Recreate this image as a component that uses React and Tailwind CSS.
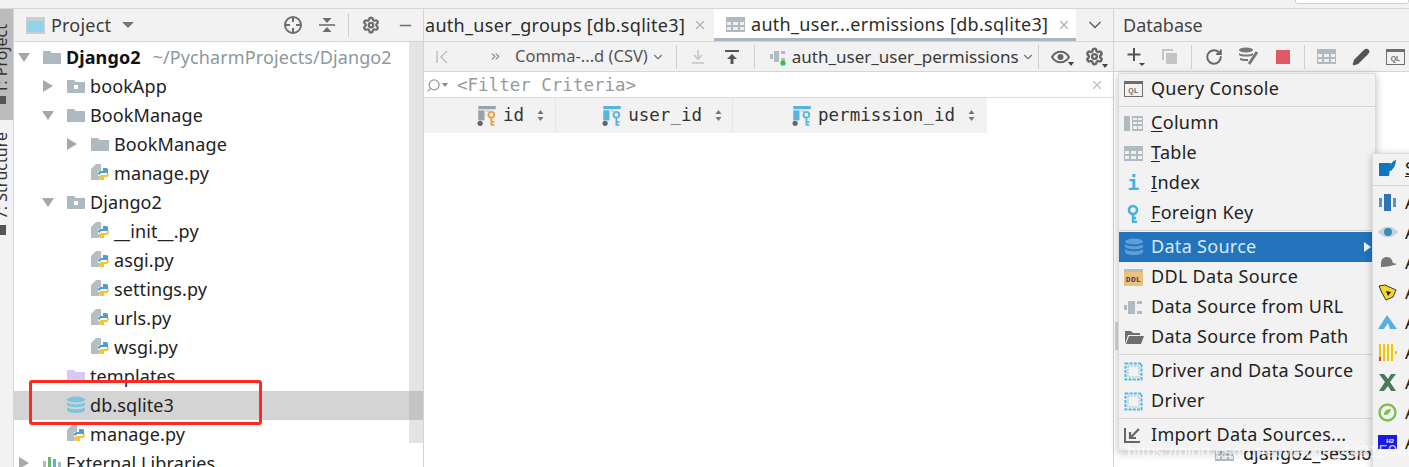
import React from "react";
import { ChevronDown, X, Settings, Minus, RotateCw, ChevronsRight, Search, Pencil } from "lucide-react";

const UI = { fontFamily: '"Noto Sans", sans-serif' };
const MONO = { fontFamily: '"DejaVu Sans Mono", monospace' };

const Folder = ({ color = "#aebac2", dot }) => (
  <svg width="20" height="16" viewBox="0 0 20 16" className="shrink-0">
    <path d="M1 2h7l2 2h9v11H1z" fill={color} />
    {dot && <rect x="8" y="7" width="4" height="4" fill="#fff" />}
  </svg>
);
const Py = () => (
  <svg width="20" height="20" viewBox="0 0 20 20" className="shrink-0">
    <path d="M1 6l5-5h5v7H8v5h1v4H1z" fill="#b4bec5" />
    <path d="M8 11c0-2 1-3 3-3h2V5h3c2 0 2 1 2 3v2h-6c-2 0-2 1-2 2z" fill="#4c9fd0" />
    <path d="M19 10c0 3-1 4-3 4h-2v3h-3c-2 0-2-1-2-3 0-1 1-2 2-2h4c2 0 2-1 2-2z" fill="#f5c531" />
  </svg>
);
const Tri = ({ open, color = "#a8a8a8" }) => (
  <svg width="12" height="12" viewBox="0 0 12 12" className="shrink-0">
    <path d={open ? "M0 2h12L6 11z" : "M1 0l10 6-10 6z"} fill={color} />
  </svg>
);
const Db = ({ color = "#7fc4dd" }) => (
  <svg width="20" height="20" viewBox="0 0 20 20" className="shrink-0">
    <ellipse cx="10" cy="4.5" rx="9" ry="3" fill={color} />
    <path d="M1 7c2 3 16 3 18 0v3c-2 3-16 3-18 0zM1 12c2 3 16 3 18 0v3c0 2-4 3-9 3s-9-1-9-3z" fill={color} />
  </svg>
);
const TableIc = ({ c = "#b0bac1" }) => (
  <svg width="19" height="15" viewBox="0 0 19 15" className="shrink-0">
    <rect width="19" height="15" fill={c} />
    <path d="M1 5h4v3H1zM7 5h5v3H7zM14 5h4v3h-4zM1 10h4v3H1zM7 10h5v3H7zM14 10h4v3h-4z" fill="#f0f0f0" />
  </svg>
);
const ColumnIc = () => (
  <svg width="19" height="15" viewBox="0 0 19 15" className="shrink-0">
    <rect width="6" height="15" fill="#b0bac1" />
    <rect x="8" width="11" height="15" fill="#b0bac1" />
    <path d="M9 2h4v2H9zM14 2h4v2h-4zM9 6h4v2H9zM14 6h4v2h-4zM9 10h4v3H9zM14 10h4v3h-4z" fill="#f0f0f0" />
  </svg>
);
const Ql = () => (
  <svg width="19" height="16" viewBox="0 0 19 16" className="shrink-0">
    <rect x=".5" y=".5" width="18" height="15" fill="none" stroke="#6e6e6e" />
    <rect x="0" y="0" width="19" height="3" fill="#6e6e6e" />
    <text x="9.5" y="12" fontSize="7" fontWeight="700" textAnchor="middle" fill="#6e6e6e" fontFamily="Liberation Sans">QL</text>
  </svg>
);
const KeyCol = ({ c }) => {
  const body = c === "#e8a33d" ? "#9aa2a8" : c;
  return (
    <svg width="20" height="20" viewBox="0 0 16 16" className="shrink-0">
      <rect x="1" y="0" width="14" height="2.6" fill={body} />
      <rect x="1" y="3.5" width="5" height="8" fill={body} />
      <rect x="7" y="3.5" width="3" height="1.2" fill="#c9ced2" />
      <circle cx="2.5" cy="13.8" r="2.1" fill="#666" />
      <circle cx="11.5" cy="7" r="2.3" fill="none" stroke={c} strokeWidth="1.5" />
      <path d="M11.5 9.3V15.5M11.5 12.8h2.4M11.5 15h2.4" stroke={c} strokeWidth="1.4" />
    </svg>
  );
};
const SortArrows = () => (
  <svg width="7" height="11" viewBox="0 0 7 11" className="shrink-0 ml-[7px]">
    <path d="M3.5 0L6.5 4h-6zM3.5 11L.5 7h6z" fill="#777" />
  </svg>
);
const DriverIc = () => (
  <svg width="19" height="19" viewBox="0 0 19 19" className="shrink-0">
    <rect x="1.5" y="1.5" width="16" height="16" fill="#eef2f4" stroke="#56b5de" strokeWidth="2" strokeDasharray="3 1.2" />
    <rect x="4" y="4" width="11" height="11" fill="#f2f2f2" stroke="#b0bac1" strokeWidth="1" strokeDasharray="2 1" />
  </svg>
);

function Row({ indent, tri, icon, children, selected }) {
  return (
    <div className={`h-[29px] flex items-center shrink-0 ${selected ? "bg-[#d4d4d4]" : ""}`}>
      <div className="flex items-center pb-[2px]" style={{ marginLeft: indent }}>
        <div className="w-[24px] flex items-center">{tri}</div>
        <div className="w-[24px] flex items-center">{icon}</div>
        <div className="text-[18px] text-[#222] whitespace-nowrap leading-none tracking-[0.1px]">{children}</div>
      </div>
    </div>
  );
}

function Project() {
  return (
    <div className="w-[410px] shrink-0 flex flex-col border-r border-[#d4d4d4] bg-white">
      <div className="h-[33px] shrink-0 flex items-center border-b border-[#d6d6d6] bg-[#f2f2f2] pl-[12px]">
        <svg width="19" height="17" viewBox="0 0 19 17" className="shrink-0">
          <rect width="19" height="17" fill="#c8ced2" />
          <rect x="1.5" y="4" width="16" height="11" fill="#92d2ea" />
        </svg>
        <span className="ml-[6px] text-[18px] text-[#3a3a3a] leading-none tracking-[0.2px]">Project</span>
        <svg width="12" height="6" viewBox="0 0 12 6" className="ml-[11px]"><path d="M0 0h12L6 6z" fill="#777" /></svg>
        <div className="ml-auto flex items-center pr-[9px]">
          <svg width="20" height="20" viewBox="0 0 20 20" className="mr-[16px]">
            <circle cx="10" cy="10" r="8" fill="none" stroke="#6e6e6e" strokeWidth="2" />
            <path d="M10 2v5M10 13v5M2 10h5M13 10h5" stroke="#6e6e6e" strokeWidth="2" />
          </svg>
          <svg width="16" height="16" viewBox="0 0 16 16" className="mr-[13px]">
            <path d="M0 8h16" stroke="#6e6e6e" strokeWidth="1.6" />
            <path d="M8 6L3.5 1h9zM8 10l4.5 5h-9z" fill="#6e6e6e" />
          </svg>
          <div className="w-px h-[24px] bg-[#d0d0d0] mr-[13px]" />
          <Settings size={18} color="#6e6e6e" strokeWidth={3} className="mr-[17px]" />
          <Minus size={17} color="#6e6e6e" strokeWidth={2.4} />
        </div>
      </div>
      <div className="flex-1 flex min-h-0 overflow-hidden">
        <div className="flex-1 bg-white flex flex-col pt-[1px] min-w-0">
          <Row indent={4} tri={<Tri open />} icon={<Folder />}>
            <span className="font-bold text-[#111]">Django2</span>
            <span className="text-[#8e979c] ml-[12px]">~/PycharmProjects/Django2</span>
          </Row>
          <Row indent={28} tri={<Tri />} icon={<Folder dot />}>bookApp</Row>
          <Row indent={28} tri={<Tri open />} icon={<Folder />}>BookManage</Row>
          <Row indent={52} tri={<Tri />} icon={<Folder />}>BookManage</Row>
          <Row indent={52} icon={<Py />}>manage.py</Row>
          <Row indent={28} tri={<Tri open />} icon={<Folder dot />}>Django2</Row>
          <Row indent={52} icon={<Py />}>__init__.py</Row>
          <Row indent={52} icon={<Py />}>asgi.py</Row>
          <Row indent={52} icon={<Py />}>settings.py</Row>
          <Row indent={52} icon={<Py />}>urls.py</Row>
          <Row indent={52} icon={<Py />}>wsgi.py</Row>
          <Row indent={28} icon={<Folder color="#d9c9f2" />}>templates</Row>
          <Row indent={28} icon={<Db />} selected>db.sqlite3</Row>
          <Row indent={28} icon={<Py />}>manage.py</Row>
          <Row indent={4} tri={<Tri />} icon={<svg width="19" height="16" viewBox="0 0 19 16"><path d="M1 6h3v10H1z" fill="#b0bac1" /><path d="M6 2h3v14H6z" fill="#6cb56c" /><path d="M11 4h3v12h-3z" fill="#56b5de" /><path d="M16 7h3v9h-3z" fill="#b0bac1" /></svg>}>External Libraries</Row>
        </div>
        <div className="w-[14px] shrink-0 flex flex-col">
          <div className="h-[349px] shrink-0 bg-[#e4e4e4]" />
          <div className="h-[29px] shrink-0 bg-[#c4c4c4]" />
          <div className="h-[23px] shrink-0 bg-[#e4e4e4]" />
        </div>
      </div>
    </div>
  );
}

const Sep = () => <div className="w-px h-[24px] bg-[#d0d0d0] shrink-0" />;
const MiniDrop = () => (
  <svg width="6" height="4" viewBox="0 0 6 4" className="shrink-0 absolute right-[-4px] bottom-[-2px]"><path d="M0 0h6L3 4z" fill="#444" /></svg>
);

function Center() {
  return (
    <div className="w-[690px] shrink-0 flex flex-col border-r border-[#d4d4d4]">
      <div className="h-[33px] shrink-0 flex items-stretch border-b border-[#d6d6d6] bg-[#f2f2f2] text-[18px] tracking-[0.3px]">
        <div className="w-[290px] shrink-0 flex items-center pl-[1px] text-[#2c2c2c] whitespace-nowrap overflow-hidden">
          auth_user_groups [db.sqlite3]
          <X size={14} color="#b0b0b0" className="ml-[8px] shrink-0" />
        </div>
        <div className="w-[362px] shrink-0 bg-white border-b-[3px] border-[#aab6c4] flex items-center pl-[12px] pt-[2px] text-[#2c2c2c] whitespace-nowrap overflow-hidden">
          <TableIc />
          <span className="ml-[6px]">auth_user...ermissions [db.sqlite3]</span>
          <X size={14} color="#b0b0b0" className="ml-[9px] shrink-0" />
        </div>
        <div className="flex-1 flex items-center pl-[9px]"><ChevronDown size={20} color="#666" /></div>
      </div>
      <div className="h-[30px] shrink-0 flex items-center bg-[#f2f2f2] border-b border-[#d6d6d6] text-[16.5px] text-[#555] whitespace-nowrap">
        <svg width="12" height="14" viewBox="0 0 12 14" className="ml-[12px] shrink-0"><path d="M1 1v12M11 1L5 7l6 6" fill="none" stroke="#bdbdbd" strokeWidth="1.4" /></svg>
        <ChevronsRight size={13} color="#888" className="ml-[41px] shrink-0" />
        <span className="ml-[13px]">Comma-...d (CSV)</span>
        <ChevronDown size={14} color="#777" className="ml-[3px] shrink-0" />
        <div className="ml-[11px]"><Sep /></div>
        <svg width="14" height="16" viewBox="0 0 14 16" className="ml-[14px] shrink-0"><path d="M7 1v8M3 6l4 4 4-4M1 14h12" fill="none" stroke="#c4c4c4" strokeWidth="1.6" /></svg>
        <svg width="16" height="16" viewBox="0 0 16 16" className="ml-[19px] shrink-0"><path d="M1 2h14" stroke="#555" strokeWidth="2" /><path d="M8 5l5 5H9.5v5h-3v-5H3z" fill="#555" /></svg>
        <div className="ml-[14px]"><Sep /></div>
        <svg width="17" height="18" viewBox="0 0 17 18" className="ml-[15px] shrink-0">
          <path d="M0 6h3v5H0zM4 3h5v11H4zM11 3h4v3h-4zM11 10h4v3h-4z" fill="#b0bac1" />
          <circle cx="13" cy="15" r="2.6" fill="#2fc24a" />
        </svg>
        <span className="ml-[5px] text-[#3a3a3a] text-[17px]">auth_user_user_permissions</span>
        <ChevronDown size={14} color="#777" className="ml-[2px] shrink-0" />
        <div className="ml-[3px]"><Sep /></div>
        <div className="relative ml-[12px] shrink-0">
          <svg width="19" height="14" viewBox="0 0 19 14" className="block">
            <path d="M1 7c4-7 13-7 17 0-4 7-13 7-17 0z" fill="none" stroke="#666" strokeWidth="2" />
            <circle cx="9.5" cy="7" r="3" fill="#666" />
          </svg>
          <MiniDrop />
        </div>
        <div className="relative ml-[15px] shrink-0">
          <Settings size={19} color="#666" strokeWidth={3} className="block" />
          <MiniDrop />
        </div>
      </div>
      <div className="h-[26px] shrink-0 bg-white flex items-center border-b border-[#dcdcdc] text-[17.5px] text-[#8b8b8b] whitespace-nowrap pt-[1px]" style={MONO}>
        <Search size={15} color="#999" className="ml-[2px] scale-x-[-1] shrink-0" />
        <svg width="6" height="4" viewBox="0 0 6 4" className="ml-[1px] shrink-0"><path d="M0 0h6L3 4z" fill="#888" /></svg>
        <span className="ml-[9px] text-[#9a9a9a]">&lt;Filter Criteria&gt;</span>
        <X size={14} color="#bbb" className="ml-auto mr-[9px] shrink-0" />
      </div>
      <div className="h-[35px] shrink-0 flex text-[17.5px] text-[#333] bg-white whitespace-nowrap" style={MONO}>
        <div className="w-[132px] bg-[#f2f2f2] border-r border-[#e6e6e6] flex items-center justify-end pr-[11px] gap-[6px]">
          <KeyCol c="#e8a33d" /><span>id</span><SortArrows />
        </div>
        <div className="w-[177px] bg-[#f2f2f2] border-r border-[#e6e6e6] flex items-center justify-end pr-[10px] gap-[6px]">
          <KeyCol c="#56b5de" /><span>user_id</span><SortArrows />
        </div>
        <div className="w-[254px] bg-[#f2f2f2] flex items-center justify-end pr-[12px] gap-[6px]">
          <KeyCol c="#56b5de" /><span>permission_id</span><SortArrows />
        </div>
      </div>
      <div className="flex-1 bg-white" />
    </div>
  );
}

const MenuItem = ({ icon, children, active, arrow }) => (
  <div className={`h-[30px] shrink-0 flex items-center pl-[5px] text-[18px] tracking-[0.3px] whitespace-nowrap ${active ? "bg-[#2374bc] text-[#dbe9f5]" : "text-[#222]"}`}>
    <div className="w-[27px] shrink-0 flex items-center">{icon}</div>
    <span className="pb-[1px]">{children}</span>
    {arrow && <svg width="7" height="10" viewBox="0 0 7 10" className="ml-auto mr-[4px]"><path d="M0 0l7 5-7 5z" fill="#e8f0f8" /></svg>}
  </div>
);
const MenuSep = () => <div className="h-[1px] shrink-0 bg-[#d4d4d4] my-[1.5px]" />;

function Database() {
  return (
    <div className="flex-1 min-w-0 flex flex-col relative">
      <div className="h-[33px] shrink-0 flex items-center border-b border-[#d6d6d6] bg-[#f2f2f2] pl-[9px] text-[18px] text-[#444]">Database</div>
      <div className="h-[30px] shrink-0 flex items-center bg-[#f2f2f2] border-b border-[#d6d6d6] pl-[13px] whitespace-nowrap">
        <svg width="19" height="19" viewBox="0 0 19 19" className="shrink-0"><path d="M7 1v13M0.5 7.5h13" stroke="#555" strokeWidth="2" /><path d="M12 16h6l-3 3z" fill="#444" /></svg>
        <svg width="17" height="17" viewBox="0 0 17 17" className="ml-[15px] shrink-0"><path d="M1 1h11v2H3v9H1z" fill="#c4c4c4" /><rect x="5" y="5" width="11" height="11" fill="#c4c4c4" /></svg>
        <div className="ml-[13px]"><Sep /></div>
        <RotateCw size={18} color="#666" strokeWidth={2.6} className="ml-[13px] shrink-0" />
        <svg width="21" height="19" viewBox="0 0 21 19" className="ml-[15px] shrink-0"><ellipse cx="8" cy="3" rx="7" ry="2.5" fill="#777" /><path d="M1 6c2 2 12 2 14 0v2c-2 2-12 2-14 0zM2 11c2 1 6 1 8 1v2c-3 0-6 0-8-1z" fill="#777" /><path d="M19 5l-8 12" stroke="#777" strokeWidth="3" /></svg>
        <div className="w-[14px] h-[14px] bg-[#e05a65] ml-[17px] shrink-0" />
        <div className="ml-[14px]"><Sep /></div>
        <div className="ml-[12px]"><TableIc /></div>
        <Pencil size={18} color="#555" fill="#555" className="ml-[16px] shrink-0" />
        <div className="ml-[16px]"><Ql /></div>
      </div>
      <div className="flex-1 bg-white" />

      <div className="absolute left-[1px] top-[313px] w-[3px] h-[28px] bg-[#d8d8d8]" />

      <div className="absolute left-[101px] top-[431px] flex items-center gap-[9px] text-[18px] text-[#222] whitespace-nowrap">
        <TableIc /><span>django2_session</span>
      </div>

      <div className="absolute left-[4px] top-[64px] w-[258px] h-[378px] bg-[#f2f2f2] border border-[#dcdcdc] shadow-[0_2px_8px_rgba(0,0,0,0.25)] flex flex-col overflow-hidden">
        <MenuItem icon={<Ql />}>Query Console</MenuItem>
        <MenuSep />
        <MenuItem icon={<ColumnIc />}><u className="underline-offset-2">C</u>olumn</MenuItem>
        <MenuItem icon={<TableIc />}><u className="underline-offset-2">T</u>able</MenuItem>
        <MenuItem icon={<span className="w-[19px] text-center text-[#3fb4e0] font-bold text-[20px] leading-none" style={MONO}>i</span>}><u className="underline-offset-2">I</u>ndex</MenuItem>
        <MenuItem icon={<svg width="19" height="19" viewBox="0 0 19 19"><circle cx="9" cy="6" r="4" fill="none" stroke="#3fb4e0" strokeWidth="2.6" /><path d="M9 10v8h4M9 14h3" fill="none" stroke="#3fb4e0" strokeWidth="2.4" /></svg>}><u className="underline-offset-2">F</u>oreign Key</MenuItem>
        <MenuSep />
        <MenuItem active arrow icon={<Db color="#5f9fd8" />}>Data Source</MenuItem>
        <MenuItem icon={<svg width="19" height="17" viewBox="0 0 19 17"><rect width="19" height="17" fill="#e8c27e" /><rect y="0" width="19" height="3" fill="#bbb" /><text x="9.5" y="12.5" fontSize="8" fontWeight="700" textAnchor="middle" fill="#444" fontFamily="Liberation Mono">DDL</text></svg>}>DDL Data Source</MenuItem>
        <MenuItem icon={<svg width="19" height="17" viewBox="0 0 19 17"><path d="M0 6h3v5H0zM4 2h7v13H4zM13 2h5v3h-5zM13 12h5v3h-5z" fill="#b0bac1" /></svg>}>Data Source from URL</MenuItem>
        <MenuItem icon={<svg width="20" height="15" viewBox="0 0 20 15"><path d="M1 1h6l2 2h7v2H4L1 14z" fill="#6e6e6e" /><path d="M5 6h15l-3 8H2z" fill="#6e6e6e" /></svg>}>Data Source from Path</MenuItem>
        <MenuSep />
        <MenuItem icon={<DriverIc />}>Driver and Data Source</MenuItem>
        <MenuItem icon={<DriverIc />}>Driver</MenuItem>
        <MenuSep />
        <MenuItem icon={<svg width="18" height="16" viewBox="0 0 18 16"><path d="M1 1v14h15" fill="none" stroke="#666" strokeWidth="2" /><path d="M15 2L6 11M6 5v6h6" fill="none" stroke="#666" strokeWidth="2.2" /></svg>}>Import Data Sources...</MenuItem>
      </div>

      <div className="absolute left-[258px] top-[144px] w-[60px] h-[320px] bg-[#f2f2f2] border border-[#dcdcdc] shadow-[0_2px_8px_rgba(0,0,0,0.25)] overflow-hidden text-[18px] text-[#222]">
        <div className="h-[29px] flex items-center pl-[5px] gap-[8px]"><svg width="19" height="18" viewBox="0 0 19 18" className="shrink-0"><path d="M1 3h12L11 16H1z" fill="#0f75bd" /><path d="M18 0c-4 1-6 5-7 10l2 1c3-3 5-7 5-11z" fill="#0f75bd" /></svg><u>S</u></div>
        <div className="h-px bg-[#d4d4d4] my-[1.5px]" />
        <SubRow icon={<svg width="19" height="19" viewBox="0 0 19 19"><path d="M6 1h7v17H6z" fill="#2e73b8" /><path d="M1 5h3v9H1zM15 5h3v9h-3z" fill="#5294cf" /></svg>} />
        <SubRow icon={<svg width="20" height="12" viewBox="0 0 20 12"><path d="M0 6c5-7 15-7 20 0-5 7-15 7-20 0z" fill="#c7d3da" /><circle cx="10" cy="6" r="4" fill="#3b8bb8" /></svg>} />
        <SubRow icon={<svg width="19" height="12" viewBox="0 0 19 12"><path d="M3 8c0-5 2-7 6-7s5 3 6 6l4 1c-4 2-12 3-16 3z" fill="#777" /></svg>} />
        <SubRow icon={<svg width="19" height="17" viewBox="0 0 19 17"><path d="M1 2l6-1 11 5-3 7-7 3-4-7z" fill="#f5d531" stroke="#333" /><path d="M8 7l5 1-3 4z" fill="#222" /></svg>} />
        <SubRow icon={<svg width="19" height="15" viewBox="0 0 19 15"><path d="M9 0L0 14h6l4-6 2 6h7z" fill="#5aaee0" /></svg>} />
        <SubRow icon={<svg width="19" height="17" viewBox="0 0 19 17"><path d="M1 0h2v17H1zM5 0h2v17H5zM9 0h2v17H9zM13 0h2v17h-2zM17 7h2v3h-2z" fill="#f5c400" /><path d="M1 13h2v4H1z" fill="#e33" /></svg>} />
        <SubRow icon={<svg width="19" height="17" viewBox="0 0 19 17"><path d="M1 0h5l4 5 3-5h5l-6 8 6 9h-5l-3-5-4 5H1l6-9z" fill="#4a7a5c" /></svg>} />
        <SubRow icon={<svg width="19" height="19" viewBox="0 0 19 19"><circle cx="9.5" cy="9.5" r="8" fill="none" stroke="#7cc04b" strokeWidth="2.4" /><path d="M6 12c0-4 3-6 7-6-1 4-3 6-7 6z" fill="#7cc04b" /></svg>} />
        <SubRow icon={<svg width="19" height="14" viewBox="0 0 19 14"><rect width="19" height="14" fill="#1a1ae0" /><text x="12" y="8" fontSize="6" fontWeight="700" textAnchor="middle" fill="#fff" fontFamily="Liberation Sans">H2</text></svg>} />
      </div>
    </div>
  );
}
const SubRow = ({ icon }) => (
  <div className="h-[30px] flex items-center pl-[5px]">
    <div className="w-[27px] shrink-0 flex items-center">{icon}</div>
    <span>A</span>
  </div>
);

export default function App() {
  return (
    <div className="relative w-[1409px] h-[467px] overflow-hidden bg-[#f2f2f2] flex flex-col" style={UI}>
      <div className="h-[9px] shrink-0 border-b border-[#d6d6d6] bg-[#f2f2f2] relative overflow-hidden">
        <div className="absolute right-0 top-[-6px] w-[114px] h-[10px] bg-white border border-[#cfcfcf] rounded-[3px]" />
      </div>
      <div className="flex flex-1 min-h-0">
        <div className="w-[14px] shrink-0 bg-[#f2f2f2] border-r border-[#d6d6d6] flex flex-col overflow-hidden text-[16px] text-[#333]">
          <div className="h-[111px] shrink-0 bg-[#bcbcbc] relative overflow-hidden">
            <span className="absolute left-[-8px] bottom-[26px] rotate-180 whitespace-nowrap [writing-mode:vertical-rl] leading-[18px]">1: Project</span>
            <div className="absolute left-0 bottom-[16px] w-[6px] h-[8px] bg-[#555]" />
          </div>
          <div className="h-[115px] shrink-0 relative overflow-hidden">
            <span className="absolute left-[-8px] top-[12px] rotate-180 whitespace-nowrap [writing-mode:vertical-rl] leading-[18px]">7: Structure</span>
            <div className="absolute left-0 top-[105px] w-[6px] h-[10px] bg-[#555]" />
          </div>
        </div>
        <Project />
        <Center />
        <Database />
      </div>
      <div className="absolute left-[29px] top-[380px] w-[233px] h-[45px] border-[3px] border-[#ff2a1f] rounded-[3px]" />
      <div className="absolute left-[1127px] top-[439px] text-[17px] text-white/70 whitespace-nowrap" style={{ fontFamily: '"Liberation Sans", sans-serif' }}>https://blog.csdn.net/weixin_43215948</div>
    </div>
  );
}
